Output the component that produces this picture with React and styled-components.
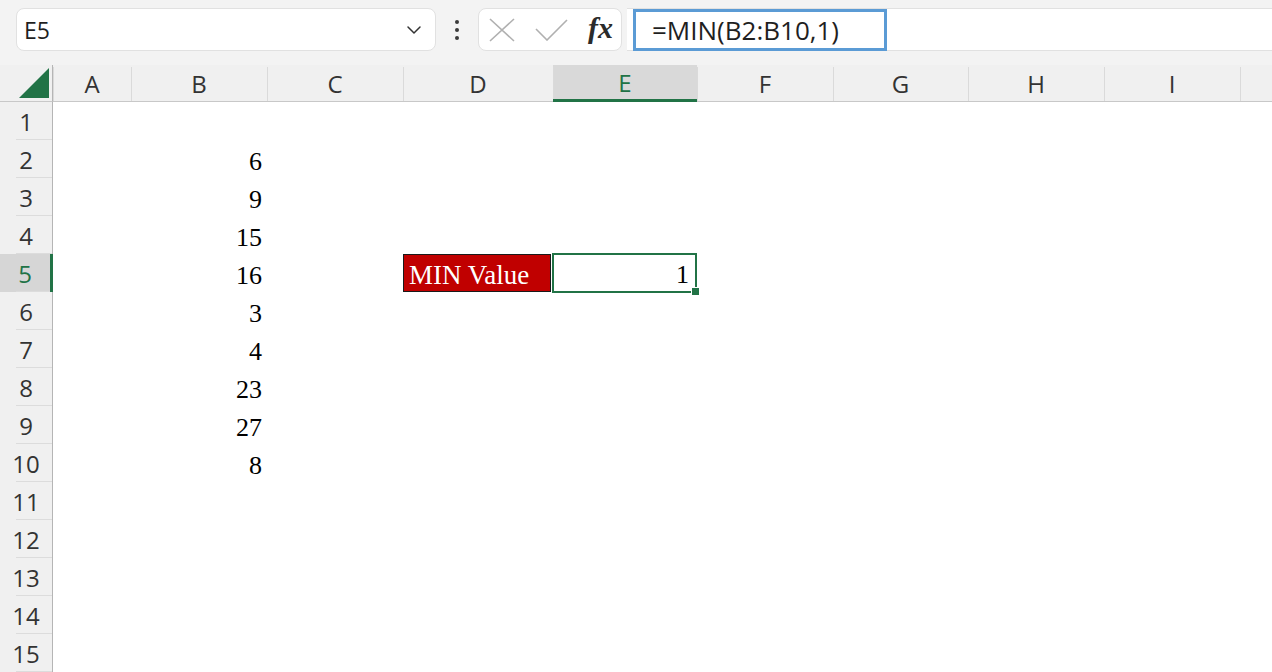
import styled, { createGlobalStyle } from "styled-components";
import { ChevronDown } from "lucide-react";

const GlobalStyle = createGlobalStyle`
  html, body {
    margin: 0;
    padding: 0;
    background: #ffffff;
    overflow: hidden;
  }
`;

const Page = styled.div`
  width: 1272px;
  height: 672px;
  display: flex;
  flex-direction: column;
  font-family: "Open Sans", "Noto Sans", sans-serif;
  color: #262626;
`;

const TopBar = styled.div`
  height: 66px;
  box-sizing: border-box;
  background: #f3f3f3;
  display: flex;
  align-items: flex-start;
  padding: 8px 0 0 16px;
`;

const NameBox = styled.div`
  width: 420px;
  height: 43px;
  box-sizing: border-box;
  background: #fff;
  border: 1px solid #e1e1e1;
  border-radius: 8px;
  display: flex;
  align-items: center;
  justify-content: space-between;
  padding: 0 9px 0 7px;
  font-size: 23px;
  color: #1f1f1f;
`;

const Dots = styled.div`
  width: 42px;
  height: 43px;
  display: flex;
  flex-direction: column;
  align-items: center;
  justify-content: center;
  gap: 4px;

  span {
    width: 4px;
    height: 4px;
    border-radius: 50%;
    background: #3a3a3a;
  }
`;

const FxButtons = styled.div`
  width: 144px;
  height: 43px;
  box-sizing: border-box;
  background: #fff;
  border: 1px solid #e1e1e1;
  border-radius: 8px;
  display: flex;
  align-items: center;
  padding: 0 8px 0 10px;
  gap: 20px;
  color: #b0b0b0;
`;

const Fx = styled.span`
  margin-left: auto;
  font-family: "Liberation Serif", "Times New Roman", serif;
  font-style: italic;
  font-weight: bold;
  font-size: 30px;
  color: #2b2b2b;
  line-height: 1;
  margin-top: -4px;
`;

const FormulaBar = styled.div`
  flex: 1;
  height: 43px;
  margin-left: 5px;
  box-sizing: border-box;
  background: #fff;
  border-top: 1px solid #e1e1e1;
  border-bottom: 1px solid #e1e1e1;
  display: flex;
  align-items: center;
  padding-left: 6px;
`;

const FormulaInput = styled.div`
  width: 254px;
  height: 42px;
  box-sizing: border-box;
  border: 3px solid #5b9bd5;
  display: flex;
  align-items: center;
  padding-left: 16px;
  font-size: 26px;
  color: #1f1f1f;
`;

const Sheet = styled.div`
  flex: 1;
  display: grid;
  grid-template-columns: 53px 78px 136px 136px 150px 144px 136px 135px 136px 136px 1fr;
  grid-auto-rows: 38px;
  grid-template-rows: 37px;
  background: #fff;
`;

const Corner = styled.div`
  background: #f0f0f0;
  border-bottom: 1px solid #c8c8c8;
  border-right: 1px solid #b5b5b5;
  box-sizing: border-box;
  position: relative;

  &::after {
    content: "";
    position: absolute;
    right: 3px;
    bottom: 3px;
    width: 0;
    height: 0;
    border-left: 30px solid transparent;
    border-bottom: 30px solid #217346;
  }
`;

const ColHeader = styled.div`
  background: ${(p) => (p.$active ? "#d9d9d9" : "#f0f0f0")};
  color: ${(p) => (p.$active ? "#217346" : "#333")};
  border-bottom: ${(p) => (p.$active ? "3px solid #217346" : "1px solid #c8c8c8")};
  box-sizing: border-box;
  display: flex;
  align-items: center;
  justify-content: center;
  font-size: 24px;
  position: relative;

  &::before {
    content: "";
    position: absolute;
    left: 0;
    top: 2px;
    bottom: 0;
    width: 1px;
    background: #dadada;
  }
`;

const RowHeader = styled.div`
  background: ${(p) => (p.$active ? "#d6d6d6" : "#f0f0f0")};
  color: ${(p) => (p.$active ? "#217346" : "#333")};
  border-right: ${(p) => (p.$active ? "3px solid #217346" : "1px solid #b5b5b5")};
  box-sizing: border-box;
  display: flex;
  align-items: center;
  justify-content: center;
  font-size: 24px;
  position: relative;

  &::after {
    content: "";
    position: absolute;
    left: 16px;
    right: 0;
    bottom: 0;
    height: 1px;
    background: #dcdcdc;
  }
`;

const Cell = styled.div`
  box-sizing: border-box;
  display: flex;
  align-items: center;
  justify-content: ${(p) => (p.$align === "left" ? "flex-start" : "flex-end")};
  padding: 5px 5px 0;
  font-family: "Liberation Serif", "Times New Roman", serif;
  font-size: 26px;
  color: #000;
`;

const LabelCell = styled(Cell)`
  background: #c00000;
  color: #fff;
  border: 1px solid #1a1a1a;
  margin-right: 2px;
  padding-top: 4px;
  font-size: 27px;
`;

const SelectedCell = styled(Cell)`
  position: relative;
  border: 2px solid #217346;
  margin: -1px 0 -1px -1px;
  padding-right: 6px;
  padding-top: 4px;

  &::after {
    content: "";
    position: absolute;
    right: -5px;
    bottom: -5px;
    width: 7px;
    height: 7px;
    background: #217346;
    border: 1px solid #fff;
  }
`;

const CancelIcon = () => (
  <svg width="26" height="24" viewBox="0 0 26 24" fill="none" stroke="currentColor" strokeWidth="1.6">
    <path d="M1 1 L25 23 M25 1 L1 23" />
  </svg>
);

const EnterIcon = () => (
  <svg width="33" height="22" viewBox="0 0 33 22" fill="none" stroke="currentColor" strokeWidth="1.6">
    <path d="M1 10 L12 21 L32 1" />
  </svg>
);

const columns = ["A", "B", "C", "D", "E", "F", "G", "H", "I", ""];
const values = { 2: 6, 3: 9, 4: 15, 5: 16, 6: 3, 7: 4, 8: 23, 9: 27, 10: 8 };

const renderRow = (r) => {
  const cells = [];
  for (let c = 0; c < columns.length; c++) {
    const key = `${r}-${c}`;
    if (c === 1 && values[r] !== undefined) {
      cells.push(<Cell key={key}>{values[r]}</Cell>);
    } else if (r === 5 && c === 3) {
      cells.push(
        <LabelCell key={key} $align="left">
          MIN Value
        </LabelCell>
      );
    } else if (r === 5 && c === 4) {
      cells.push(<SelectedCell key={key}>1</SelectedCell>);
    } else {
      cells.push(<Cell key={key} />);
    }
  }
  return cells;
};

const App = () => {
  const rows = Array.from({ length: 15 }, (_, i) => i + 1);

  return (
    <Page>
      <GlobalStyle />
      <TopBar>
        <NameBox>
          <span>E5</span>
          <ChevronDown size={24} strokeWidth={1.5} color="#333" />
        </NameBox>
        <Dots>
          <span />
          <span />
          <span />
        </Dots>
        <FxButtons>
          <CancelIcon />
          <EnterIcon />
          <Fx>fx</Fx>
        </FxButtons>
        <FormulaBar>
          <FormulaInput>=MIN(B2:B10,1)</FormulaInput>
        </FormulaBar>
      </TopBar>
      <Sheet>
        <Corner />
        {columns.map((col, i) => (
          <ColHeader key={i} $active={col === "E"}>
            {col}
          </ColHeader>
        ))}
        {rows.map((r) => [
          <RowHeader key={`h${r}`} $active={r === 5}>
            {r}
          </RowHeader>,
          ...renderRow(r),
        ])}
      </Sheet>
    </Page>
  );
};

export default App;
